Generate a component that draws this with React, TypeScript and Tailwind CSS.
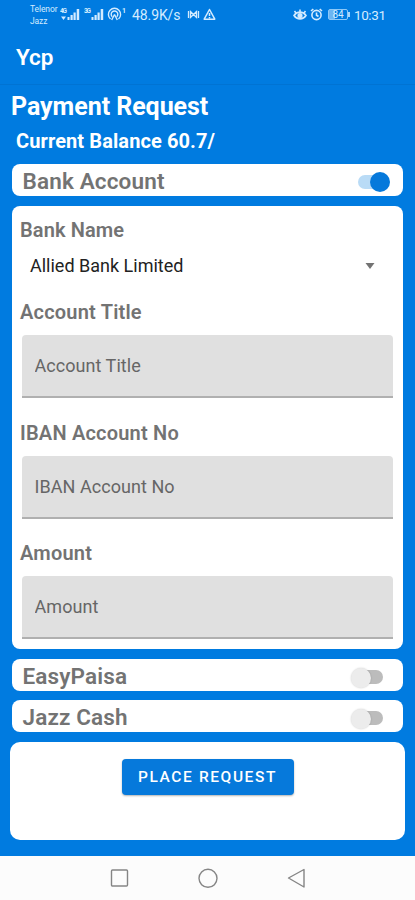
import { useState } from 'react'

const methods = ['EasyPaisa', 'Jazz Cash']

function Signal({ label, arrows = false }: { label: string; arrows?: boolean }) {
  return (
    <svg className="w-5 h-4" viewBox="0 0 20 16" fill="currentColor">
      <text x="0" y="7" fontSize="6.5" fontWeight="700" textLength="7" fontFamily="Roboto, sans-serif">{label}</text>
      {arrows && <path d="M1 10.500h5L3.500 14z" />}
      <rect x="7.500" y="11" width="2" height="3" />
      <rect x="10.500" y="9" width="2.200" height="5" />
      <rect x="13.500" y="6.500" width="2.200" height="7.500" />
      <rect x="16.700" y="3" width="2.500" height="11" />
    </svg>
  )
}

function StatusBar() {
  return (
    <div className="h-[29px] flex items-start text-[#d3ebff]">
      <div className="ml-[30px] w-[30px] pt-[3px] text-[8.5px] leading-[12px] tracking-[-0.1px]">
        <div>Telenor</div>
        <div>Jazz</div>
      </div>
      <div className="mt-1.5 flex items-center h-4">
        <Signal label="4G" arrows />
        <div className="w-[4px]" />
        <Signal label="3G" />
        {/* Hotspot */}
        <svg className="ml-[3px] w-[21px] h-4" viewBox="0 0 21 16" fill="none" stroke="currentColor" strokeWidth="1.4">
          <path d="M3.500 13A6.100 6.100 0 1 1 11.500 13M5.300 10.800a3.300 3.300 0 1 1 4.400 0" />
          <path d="M7.500 8.500l-2.800 5.500M7.500 8.500l2.800 5.500" />
          <text x="15" y="7" fontSize="7" fontWeight="700" fill="currentColor" stroke="none" fontFamily="Roboto, sans-serif">1</text>
        </svg>
      </div>
      <div className="ml-[4px] mt-[7px] w-[55px] text-[14px] leading-[17px] tracking-[-0.1px] whitespace-nowrap">48.9K/s</div>
      <svg className="mt-2 w-[13px] h-[13px]" viewBox="0 0 13 13" fill="none" stroke="currentColor" strokeWidth="1.300">
        <path d="M1.500 3v7M3.500 3.500l3 3-3 3zM9.500 3.500l-3 3 3 3zM11.500 3v7" />
      </svg>
      <svg className="ml-[3px] mt-2 w-[13px] h-[13px]" viewBox="0 0 13 13" fill="none" stroke="currentColor" strokeWidth="1.500" strokeLinejoin="round">
        <path d="M6.500 1.500l5.300 9.700H1.200zM6.500 5v3M6.500 9v1.200" />
      </svg>
      <svg className="ml-auto mt-2 w-[14px] h-[13px]" viewBox="0 0 14 13" fill="none" stroke="currentColor" strokeWidth="1.600">
        <path d="M1 7.500c3-4.500 9-4.500 12 0-3 4.500-9 4.500-12 0zM1.500 3l1.500 2M7 1.500V4M12.500 3L11 5" />
        <circle cx="7" cy="7.500" r="1.800" fill="currentColor" />
      </svg>
      <svg className="ml-[3px] mt-2 w-[13px] h-[13px]" viewBox="0 0 13 13" fill="none" stroke="currentColor" strokeWidth="1.600">
        <circle cx="6.500" cy="7" r="4.600" />
        <path d="M6.500 4.500v2.700l2 1.300M1 3l2.300-2M12 3L9.700 1" />
      </svg>
      <div className="ml-[5px] mt-[9px] flex items-center">
        <div className="w-[20px] h-[11px] rounded-[2px] border border-[#8cc8f8] bg-linear-to-r from-[#6bb5f2] from-35% to-transparent to-35% text-[10px] leading-[9px] text-center">84</div>
        <div className="w-[2px] h-[5px] bg-[#a8d6fb]" />
      </div>
      <div className="ml-[4px] mr-[29px] mt-[7px] w-[32px] text-[13.5px] leading-[17px] tracking-[-0.4px] whitespace-nowrap">10:31</div>
    </div>
  )
}

function Switch({ on, onToggle }: { on: boolean; onToggle: () => void }) {
  return (
    <button onClick={onToggle} className={`relative w-[32px] h-[20px] ${on ? 'mt-1 mr-[13px]' : 'mt-[5px] mr-[20px]'}`}>
      <span className={`block h-[14px] w-[28px] rounded-full ${on ? 'bg-[#b9dbf6]' : '-mt-[2px] ml-[4px] bg-[#bcbcbc]'}`} />
      <span
        className={`absolute top-0 w-[20px] h-[20px] rounded-full ${
          on ? 'right-0 bg-[#0679db]' : 'left-0 bg-[#ececec] shadow-[0_0_2px_rgba(0,0,0,0.2)]'
        }`}
      />
    </button>
  )
}

function MethodRow({ name, initial = false }: { name: string; initial?: boolean }) {
  const [on, setOn] = useState(initial)
  return (
    <div className="mx-3 h-8 flex items-center justify-between rounded-[8px] bg-white pl-[10.5px]">
      <span className="pt-px text-[22.5px] leading-8 font-semibold tracking-[0.15px] text-[#737373] whitespace-nowrap">{name}</span>
      <Switch on={on} onToggle={() => setOn(!on)} />
    </div>
  )
}

function Field({ label }: { label: string }) {
  return (
    <div className="h-[120.5px]">
      <div className="h-[37px] pl-2 text-[20px] leading-[28px] font-semibold tracking-[0.2px] text-[#737373]">{label}</div>
      <input
        placeholder={label}
        className="block ml-[10px] w-[371px] h-[63px] rounded-t-[4px] border-b-2 border-[#b0b0b0] bg-[#e0e0e0] pl-[12.5px] pr-3 text-[18px] tracking-[0.05px] placeholder:text-[#666] outline-none"
      />
    </div>
  )
}

export default function App() {
  return (
    <div className="w-full h-[900px] flex flex-col overflow-hidden bg-[#007be0] font-[Roboto,sans-serif]">
      <StatusBar />
      <header className="h-[56px] border-b border-[#0073d3] pl-4 text-[22.5px] leading-[57px] font-semibold text-white">Ycp</header>

      <h1 className="pl-[11px] h-[43px] text-[25px] leading-[43px] font-bold tracking-[-0.05px] text-white">Payment Request</h1>
      <p className="pl-4 h-[36px] text-[20px] leading-[27px] font-bold tracking-[0.1px] text-white">Current Balance 60.7/</p>

      <MethodRow name="Bank Account" initial />

      <div className="mx-3 mt-[10px] h-[443px] rounded-[8px] bg-white">
        <div className="pl-2 pt-[10px] text-[20px] leading-[28px] font-semibold tracking-[0.1px] text-[#737373]">Bank Name</div>
        <div className="h-[54px] pl-[18px] pr-[28px] pt-[8px] flex justify-between">
          <span className="text-[18px] leading-[28px] text-[#222]">Allied Bank Limited</span>
          <svg className="mt-[11px] w-[10px] h-[6px]" viewBox="0 0 10 6" fill="#737373">
            <path d="M0.500 0h9L5 6z" />
          </svg>
        </div>
        <Field label="Account Title" />
        <Field label="IBAN Account No" />
        <Field label="Amount" />
      </div>

      <div className="mt-[10px] mb-[10px] flex flex-col gap-[9px]">
        {methods.map((m) => (
          <MethodRow key={m} name={m} />
        ))}
      </div>

      <div className="mx-[10px] h-[98px] shrink-0 rounded-[10px] bg-white flex justify-center items-start pt-[17px]">
        <button className="w-[172px] h-[36px] rounded-[4px] bg-[#0679db] pt-px text-[15.5px] font-medium tracking-[1.6px] text-white whitespace-nowrap shadow-[0_1px_2px_rgba(0,0,0,0.3)]">
          PLACE REQUEST
        </button>
      </div>

      {/* System navigation */}
      <nav className="mt-auto h-[44px] shrink-0 bg-[#fcfcfc] flex justify-center">
        <svg className="w-[200px] h-[44px]" viewBox="0 0 200 44" fill="none" stroke="#858585" strokeWidth="1.400" strokeLinejoin="round">
          <rect x="3.500" y="14" width="16" height="16" rx="1" />
          <circle cx="100" cy="22.300" r="9" />
          <path d="M196 13.500v17.500l-15.500-9z" />
        </svg>
      </nav>
    </div>
  )
}
